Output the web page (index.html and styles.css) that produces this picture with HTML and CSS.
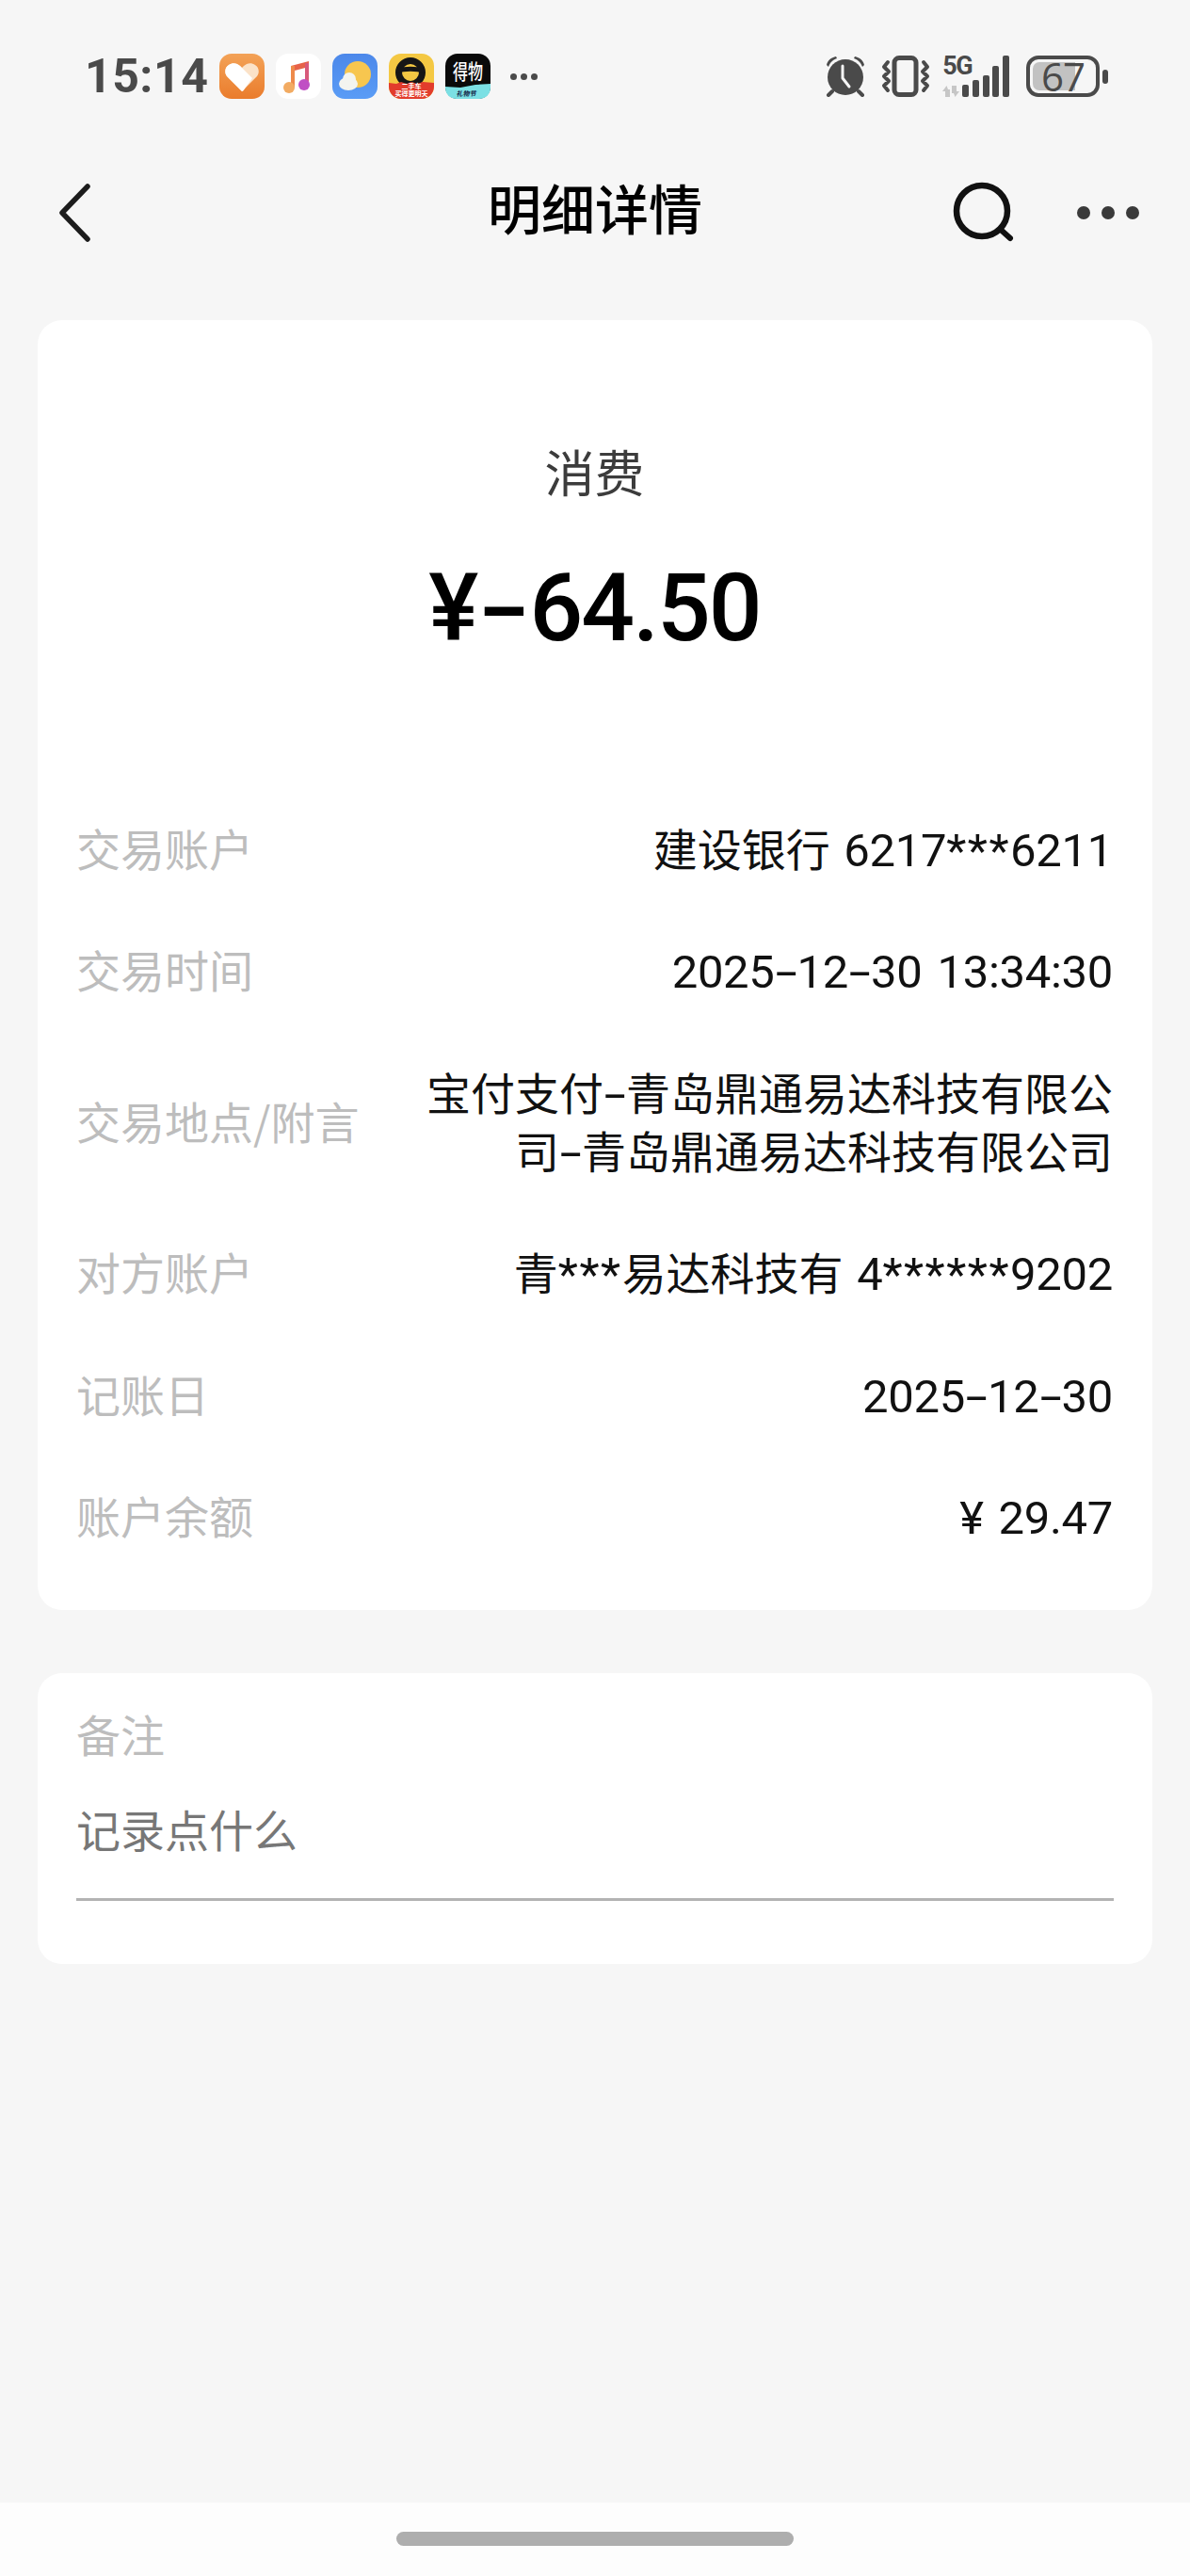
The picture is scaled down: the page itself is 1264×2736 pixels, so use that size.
FILE: index.html
```html
<!DOCTYPE html>
<html lang="zh-CN">
<head>
<meta charset="utf-8">
<title>明细详情</title>
<link rel="stylesheet" href="styles.css">
</head>
<body>
<div class="page">
  <header class="status">
    <span class="clock">15:14</span>
    <div class="apps">
      <svg class="app" viewBox="0 0 48 48"><defs><linearGradient id="g1" x1="0" y1="0" x2="0" y2="1"><stop offset="0" stop-color="#f3a257"/><stop offset="1" stop-color="#ea7c2c"/></linearGradient></defs><rect width="48" height="48" rx="13" fill="url(#g1)"/><path d="M24 40 8 24c-3-4-2-10 2-12 4-3 9-2 12 1l2 2 2-2c3-3 8-4 12-1 4 2 5 8 2 12z" fill="#fbe2c8"/><path d="M24 40 8 24c-3-4-2-10 2-12 4-3 9-2 12 1l13 13-8 11c-1 2-2 3-3 3z" fill="#fff"/></svg>
      <svg class="app" viewBox="0 0 48 48"><defs><linearGradient id="g2" x1="0" y1="0" x2="1" y2="1"><stop offset="0" stop-color="#ee5d45"/><stop offset="1" stop-color="#e0684c"/></linearGradient></defs><rect width="48" height="48" rx="13" fill="#fff"/><path d="M16 13 35 8v6l-15 4z" fill="url(#g2)"/><path d="M16 13h4v23h-4z" fill="#ee8a4a"/><path d="M31 10h4v23h-4z" fill="#d85a7a"/><circle cx="14" cy="36" r="6" fill="#f2ab62"/><circle cx="30" cy="33" r="6" fill="#c04fc4"/></svg>
      <svg class="app" viewBox="0 0 48 48"><defs><linearGradient id="g3" x1="0" y1="0" x2="0" y2="1"><stop offset="0" stop-color="#4c88ea"/><stop offset="1" stop-color="#5a9cf6"/></linearGradient></defs><rect width="48" height="48" rx="13" fill="url(#g3)"/><circle cx="27" cy="22" r="14" fill="#f7c64f"/><ellipse cx="17" cy="32" rx="10" ry="7" fill="#f3f4ef"/><circle cx="18" cy="27" r="7" fill="#f3f4ef"/></svg>
      <svg class="app" viewBox="0 0 48 48"><rect width="48" height="48" rx="13" fill="#f4c843"/><circle cx="23" cy="20" r="12.500" fill="none" stroke="#161616" stroke-width="7"/><path d="M9 16c8-3 20-3 28 0v5c-8-3-20-3-28 0z" fill="#161616"/><path d="M0 31l8 1 5-2 6 2 5-2 6 2 6-2 12 1v4c0 7-6 13-13 13H13C6 48 0 42 0 35z" fill="#e23c2c"/><text class="tiny" x="24" y="37" text-anchor="middle">二手车</text><text class="tiny" x="24" y="45" text-anchor="middle">买得更明天</text></svg>
      <svg class="app" viewBox="0 0 48 48"><rect width="48" height="48" rx="13" fill="#0a0a0a"/><path d="M0 35l16 1 16-3 16-1v4c0 7-5 12-12 12H12C5 48 0 43 0 36z" fill="#7be0e4"/><text class="dewu" x="24" y="27" text-anchor="middle" textLength="32" lengthAdjust="spacingAndGlyphs">得物</text><text class="tiny dark" x="22" y="45" text-anchor="middle">礼物节</text></svg>
    </div>
    <div class="more-dots"><i></i><i></i><i></i></div>
    <div class="sys">
      <svg class="alarm" viewBox="0 0 44 44"><path d="M2 10C3 5 7 2 12 1l1 2C8 5 6 7 4 12zM42 10c-1-5-5-8-10-9l-1 2c5 2 7 4 9 9z" fill="#4a4a4a"/><circle cx="22" cy="23" r="19" fill="#4a4a4a"/><path d="M19 11v13l7 9" fill="none" stroke="#f6f6f6" stroke-width="3" stroke-linecap="round" stroke-linejoin="round"/><path d="M8 38 4 42M36 38l4 4" stroke="#4a4a4a" stroke-width="4" stroke-linecap="round"/></svg>
      <svg class="vib" viewBox="0 0 52 44"><rect x="14" y="2.500" width="23" height="39" rx="5" fill="none" stroke="#4a4a4a" stroke-width="5"/><path d="M7 7 3 12 8 17 3 22 8 27 3 32 7 37M45 7 49 12 44 17 49 22 44 27 49 32 45 37" fill="none" stroke="#4a4a4a" stroke-width="4" stroke-linecap="round" stroke-linejoin="round"/></svg>
      <div class="signal">
        <div class="net"><span class="g5">5G</span><svg class="arrows" viewBox="0 0 18 12"><path d="M8 12V4H6L4.500 0 0 6h3v6zM10 0v8h2l1.500 4L18 6h-3V0z" fill="#c6c6c6"/></svg></div>
        <div class="bars"><i class="b1"></i><i class="b2"></i><i class="b3"></i><i class="b4"></i><i class="b5"></i></div>
      </div>
      <div class="battery"><div class="cell"><div class="fill"></div><span class="pct">67</span></div><i class="nub"></i></div>
    </div>
  </header>

  <nav class="nav">
    <svg class="back" viewBox="0 0 36 62"><path d="M32 3 5 31l27 28" fill="none" stroke="#1c1c1c" stroke-width="5.500" stroke-linecap="round" stroke-linejoin="round"/></svg>
    <h1 class="title">明细详情</h1>
    <div class="actions">
      <svg class="search" viewBox="0 0 66 66"><circle cx="32" cy="31" r="27" fill="none" stroke="#111" stroke-width="6.500"/><path d="M52 51l10 9" stroke="#111" stroke-width="6" stroke-linecap="round"/></svg>
      <div class="menu"><i></i><i></i><i></i></div>
    </div>
  </nav>

  <main class="main">
    <section class="card detail">
      <div class="kind">消费</div>
      <div class="amount">¥<span class="dash-lg">-</span>64.50</div>
      <div class="rows">
        <div class="row"><span class="label">交易账户</span><span class="value">建设银行 <span class="num">6217<span class="stars">***</span>6211</span></span></div>
        <div class="row"><span class="label">交易时间</span><span class="value"><span class="num">2025<span class="dash">-</span>12<span class="dash">-</span>30 13:34:30</span></span></div>
        <div class="row"><span class="label">交易地点/附言</span><span class="value wrap">宝付支付<span class="num dash">-</span>青岛鼎通易达科技有限公司<span class="num dash">-</span>青岛鼎通易达科技有限公司</span></div>
        <div class="row"><span class="label">对方账户</span><span class="value">青<span class="num stars">***</span>易达科技有 <span class="num">4<span class="stars">******</span>9202</span></span></div>
        <div class="row"><span class="label">记账日</span><span class="value"><span class="num">2025<span class="dash">-</span>12<span class="dash">-</span>30</span></span></div>
        <div class="row"><span class="label">账户余额</span><span class="value"><span class="num">¥ 29.47</span></span></div>
      </div>
    </section>
    <section class="card note">
      <div class="label">备注</div>
      <div class="placeholder">记录点什么</div>
    </section>
  </main>

  <footer class="home"><div class="pill"></div></footer>
</div>
</body>
</html>
```
FILE: styles.css
```css
* { box-sizing: border-box; }
html, body { margin: 0; padding: 0; }
body {
  background: #f6f6f6;
  font-family: "Noto Sans CJK SC", "Noto Sans", sans-serif;
  color: #111;
}
.page { display: flex; flex-direction: column; width: 1264px; height: 2736px; }

/* status bar */
.status { display: flex; align-items: center; height: 48px; margin-top: 57px; padding: 0 87px 0 90px; flex: none; }
.clock { font-family: Roboto, sans-serif; font-weight: 700; font-size: 50px; line-height: 48px; letter-spacing: 0.500px; color: #4a4a4a; width: 143px; }
.apps { display: flex; gap: 12px; }
.app { width: 48px; height: 48px; display: block; overflow: visible; }
.tiny { font-family: "Noto Sans CJK SC", sans-serif; font-size: 7px; fill: #fff; font-weight: 700; }
.tiny.dark { fill: #124; font-style: italic; }
.dewu { font-family: "Noto Sans CJK SC", sans-serif; font-size: 22px; font-weight: 500; fill: #fff; }
.more-dots { display: flex; gap: 4px; margin-left: 21px; }
.more-dots i { width: 7px; height: 7px; border-radius: 50%; background: #4a4a4a; }
.sys { display: flex; align-items: center; margin-left: auto; }
.alarm { width: 44px; height: 44px; display: block; }
.vib { width: 52px; height: 44px; display: block; margin-left: 16px; }
.signal { display: flex; align-items: flex-end; margin-left: 13px; height: 44px; }
.net { display: flex; flex-direction: column; justify-content: space-between; height: 44px; width: 21px; }
.g5 { font-family: Roboto, sans-serif; font-weight: 700; font-size: 27px; line-height: 22px; letter-spacing: -1.500px; color: #4a4a4a; white-space: nowrap; }
.arrows { width: 18px; height: 12px; display: block; }
.bars { display: flex; align-items: flex-end; gap: 3.700px; }
.bars i { display: block; width: 7px; background: #4a4a4a; border-radius: 2px; }
.b1 { height: 13px; } .b2 { height: 18px; } .b3 { height: 23px; } .b4 { height: 33px; } .b5 { height: 44px; }
.battery { display: flex; align-items: center; margin-left: 18px; }
.cell { position: relative; width: 78px; height: 44px; border: 4px solid #4a4a4a; border-radius: 13px; display: flex; align-items: center; justify-content: center; }
.fill { position: absolute; left: 3px; top: 3px; bottom: 3px; width: 45px; background: #c2c2c2; border-radius: 7px 0 0 7px; }
.pct { position: relative; font-family: "Open Sans", sans-serif; font-weight: 500; font-size: 42px; line-height: 36px; letter-spacing: -1px; color: #4a4a4a; }
.nub { width: 6px; height: 15px; border-radius: 3px; background: #4a4a4a; margin-left: 3px; display: block; }

/* nav */
.nav { position: relative; display: flex; align-items: center; justify-content: space-between; height: 90px; margin-top: 76px; padding: 0 54px 0 61px; flex: none; }
.back { width: 36px; height: 62px; display: block; }
.title { margin: 0; font-size: 57px; line-height: 76px; font-weight: 500; color: #000; position: absolute; left: 0; right: 0; top: 0; text-align: center; }
.actions { display: flex; align-items: center; gap: 67px; position: relative; }
.search { width: 66px; height: 66px; display: block; }
.menu { display: flex; gap: 12px; }
.menu i { width: 14px; height: 14px; border-radius: 50%; background: #3a3a3a; }

/* cards */
.main { flex: 1; padding: 69px 40px 0; display: flex; flex-direction: column; gap: 67px; }
.card { background: #fff; border-radius: 26px; }
.detail { padding: 129px 42px 69.500px 41px; }
.kind { text-align: center; font-size: 53px; line-height: 62px; color: #3c3c3c; }
.amount { text-align: center; font-family: Roboto, sans-serif; font-weight: 500; font-size: 100px; line-height: 100px; margin-top: 65px; color: #000; letter-spacing: -2px; }
.dash-lg { display: inline-block; width: 56px; transform: scaleX(1.600); text-align: center; }
.rows { display: flex; flex-direction: column; gap: 67.500px; margin-top: 172.500px; }
.row { display: flex; justify-content: space-between; align-items: center; }
.label { font-size: 47px; line-height: 62px; color: #bdbdbd; white-space: nowrap; }
.value { font-size: 47px; line-height: 62px; color: #111; text-align: right; white-space: nowrap; word-spacing: 4px; }
.value.wrap { white-space: normal; max-width: 735px; }
.num { font-family: Roboto, sans-serif; font-size: 49px; line-height: 1; letter-spacing: -0.300px; }
.stars { letter-spacing: 1.500px; }
.dash { display: inline-block; width: 24px; text-align: center; transform: scaleX(1.700); }
.note { height: 309px; padding: 33px 41px 0; }
.placeholder { font-size: 47px; line-height: 62px; color: #777; margin-top: 39px; padding-bottom: 43px; border-bottom: 3px solid #b3b3b3; }

/* home indicator */
.home { height: 78px; background: #fdfdfd; flex: none; display: flex; justify-content: center; padding-top: 31px; }
.pill { width: 422px; height: 15px; border-radius: 8px; background: #aeaeae; }
```
